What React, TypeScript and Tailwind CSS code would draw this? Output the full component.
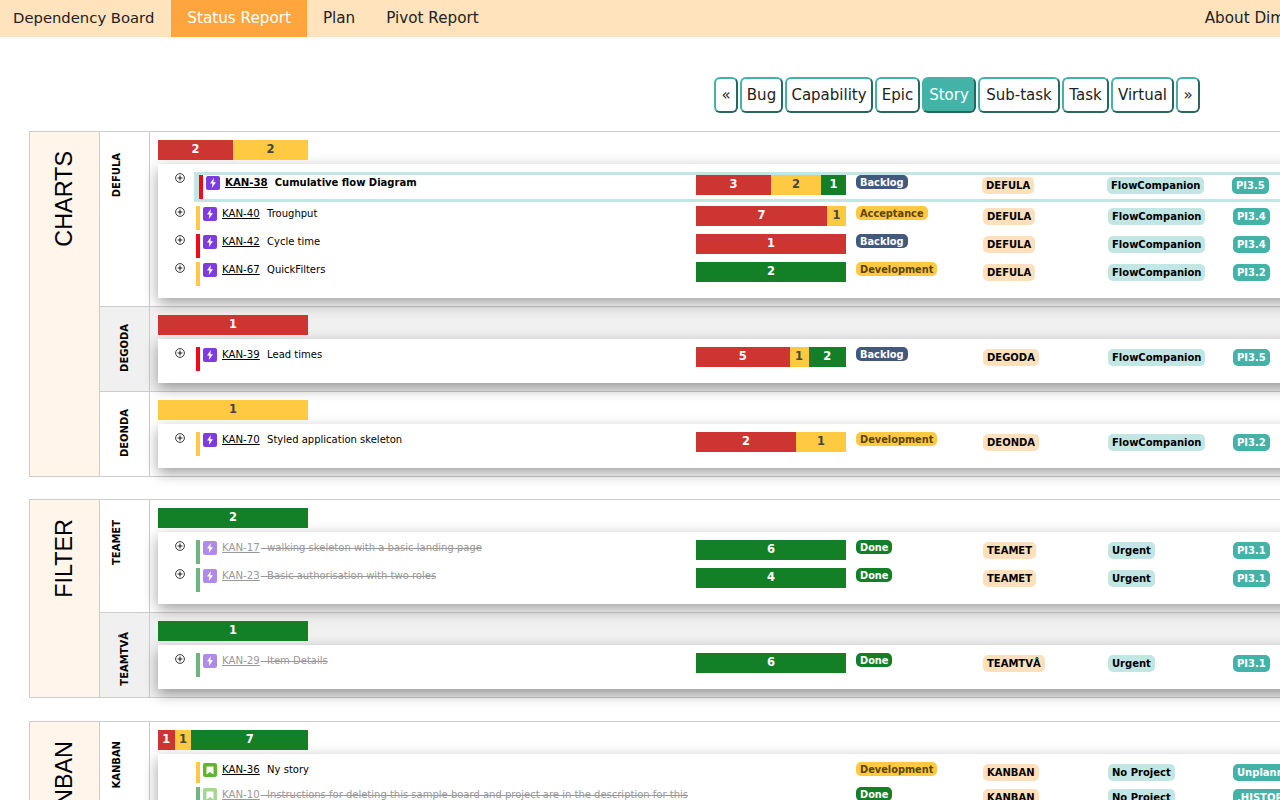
const FONT = "font-['DejaVu_Sans',Verdana,sans-serif]";

const FILTER_BUTTONS = [
    { label: "«", width: "w-[24px]" },
    { label: "Bug", width: "w-[43px]" },
    { label: "Capability", width: "w-[88px]" },
    { label: "Epic", width: "w-[45px]" },
    { label: "Story", width: "w-[54px]" },
    { label: "Sub-task", width: "w-[82px]" },
    { label: "Task", width: "w-[47px]" },
    { label: "Virtual", width: "w-[63px]" },
    { label: "»", width: "w-[24px]" },
];

type Segment = { n: number; color: "red" | "yellow" | "green" };
type Issue = {
    id: string;
    title: string;
    flag: string;
    type?: "story";
    bar?: Segment[];
    status: string;
    team: string;
    project: string;
    pi: string;
    selected?: boolean;
    done?: boolean;
    noExpand?: boolean;
};
type Team = { name: string; top: string; bar: Segment[]; issues: Issue[] };
type Group = { name: string; teams: Team[] };

const FLAG_RED = "bg-[#f5061d]";
const FLAG_YELLOW = "bg-[#ffc942]";
const FLAG_GREEN = "bg-[#70b47e]";

const r = (n: number): Segment => ({ n, color: "red" });
const y = (n: number): Segment => ({ n, color: "yellow" });
const g = (n: number): Segment => ({ n, color: "green" });

const groups: Group[] = [
    {
        name: "CHARTS",
        teams: [
            {
                name: "DEFULA",
                top: "pt-[21px] pl-[11px]",
                bar: [r(2), y(2)],
                issues: [
                    { id: "KAN-38", title: "Cumulative flow Diagram", flag: FLAG_RED, bar: [r(3), y(2), g(1)], status: "Backlog", team: "DEFULA", project: "FlowCompanion", pi: "PI3.5", selected: true },
                    { id: "KAN-40", title: "Troughput", flag: FLAG_YELLOW, bar: [r(7), y(1)], status: "Acceptance", team: "DEFULA", project: "FlowCompanion", pi: "PI3.4" },
                    { id: "KAN-42", title: "Cycle time", flag: FLAG_RED, bar: [r(1)], status: "Backlog", team: "DEFULA", project: "FlowCompanion", pi: "PI3.4" },
                    { id: "KAN-67", title: "QuickFilters", flag: FLAG_YELLOW, bar: [g(2)], status: "Development", team: "DEFULA", project: "FlowCompanion", pi: "PI3.2" },
                ],
            },
            {
                name: "DEGODA",
                top: "pt-[17px] pl-[19px]",
                bar: [r(1)],
                issues: [
                    { id: "KAN-39", title: "Lead times", flag: FLAG_RED, bar: [r(5), y(1), g(2)], status: "Backlog", team: "DEGODA", project: "FlowCompanion", pi: "PI3.5" },
                ],
            },
            {
                name: "DEONDA",
                top: "pt-[17px] pl-[19px]",
                bar: [y(1)],
                issues: [
                    { id: "KAN-70", title: "Styled application skeleton", flag: FLAG_YELLOW, bar: [r(2), y(1)], status: "Development", team: "DEONDA", project: "FlowCompanion", pi: "PI3.2" },
                ],
            },
        ],
    },
    {
        name: "FILTER",
        teams: [
            {
                name: "TEAMET",
                top: "pt-[20px] pl-[11px]",
                bar: [g(2)],
                issues: [
                    { id: "KAN-17", title: "walking skeleton with a basic landing page", flag: FLAG_GREEN, bar: [g(6)], status: "Done", team: "TEAMET", project: "Urgent", pi: "PI3.1", done: true },
                    { id: "KAN-23", title: "Basic authorisation with two roles", flag: FLAG_GREEN, bar: [g(4)], status: "Done", team: "TEAMET", project: "Urgent", pi: "PI3.1", done: true },
                ],
            },
            {
                name: "TEAMTVÅ",
                top: "pt-[19px] pl-[19px]",
                bar: [g(1)],
                issues: [
                    { id: "KAN-29", title: "Item Details", flag: FLAG_GREEN, bar: [g(6)], status: "Done", team: "TEAMTVÅ", project: "Urgent", pi: "PI3.1", done: true },
                ],
            },
        ],
    },
    {
        name: "KANBAN",
        teams: [
            {
                name: "KANBAN",
                top: "pt-[19px] pl-[11px]",
                bar: [r(1), y(1), g(7)],
                issues: [
                    { id: "KAN-36", title: "Ny story", flag: FLAG_YELLOW, type: "story", status: "Development", team: "KANBAN", project: "No Project", pi: "Unplanned", noExpand: true },
                    { id: "KAN-10", title: "Instructions for deleting this sample board and project are in the description for this", flag: FLAG_GREEN, type: "story", status: "Done", team: "KANBAN", project: "No Project", pi: ".HISTORY", noExpand: true, done: true },
                ],
            },
        ],
    },
];

function ExpandIcon() {
    return (
        <svg width="10" height="10" viewBox="0 0 10 10" fill="none" stroke="#222" className="block">
            <circle cx="5" cy="5" r="4.4" strokeWidth="0.9" />
            <path d="M5 2.6v4.8M2.6 5h4.8" strokeWidth="1.1" />
        </svg>
    );
}

function TypeIcon({ story, done }: { story: boolean; done: boolean }) {
    const bg = story ? (done ? "bg-[#a6d78f]" : "bg-[#5cb82f]") : done ? "bg-[#b08ae8]" : "bg-[#7d3ce0]";
    return (
        <span className={`${bg} flex h-[14px] w-[14px] shrink-0 items-center justify-center rounded-[2px]`}>
            {story ? (
                <svg width="8" height="9" viewBox="0 0 8 9" fill="white">
                    <path d="M0.5 0.5h7v8L4 6 0.5 8.5z" />
                </svg>
            ) : (
                <svg width="8" height="10" viewBox="0 0 8 10" fill="white">
                    <path d="M4.8 0 1 5.6h2.4L2.8 10 7 4.2H4.4z" />
                </svg>
            )}
        </span>
    );
}

function ProgressBar({ segments }: { segments: Segment[] }) {
    const total = segments.reduce((sum, s) => sum + s.n, 0);
    return (
        <div className="flex h-5 w-[150px] shrink-0 text-[11.5px] font-bold leading-[18px]">
            {segments.map((s, i) => (
                <div
                    key={i}
                    style={{ width: `${(s.n / total) * 100}%` }}
                    className={
                        s.color === "red"
                            ? "bg-[#cd3532] text-center text-white"
                            : s.color === "yellow"
                              ? "bg-[#ffc942] text-center text-[#444]"
                              : "bg-[#137f26] text-center text-white"
                    }
                >
                    {s.n}
                </div>
            ))}
        </div>
    );
}

function StatusBadge({ status }: { status: string }) {
    const colors =
        status === "Backlog"
            ? "bg-[#42597e] text-white"
            : status === "Done"
              ? "bg-[#137f26] text-white"
              : "bg-[#ffc942] text-[#5a4300]";
    return (
        <span className={`${colors} block h-[14px] rounded-[5px] px-1 text-[9.8px] font-bold leading-[15px]`}>
            {status}
        </span>
    );
}

function Pill({ text, colors }: { text: string; colors: string }) {
    return (
        <span className={`${colors} mt-[2px] block h-[17px] whitespace-nowrap rounded-[5px] px-1 text-[10px] font-bold leading-[17px]`}>
            {text}
        </span>
    );
}

function IssueRow({ issue }: { issue: Issue }) {
    const done = !!issue.done;
    const height = issue.noExpand ? "h-[21px]" : "h-6";
    return (
        <div className="mb-1 flex items-start">
            <div className="ml-[17px] mt-[1px] w-[10px] shrink-0">{!issue.noExpand && <ExpandIcon />}</div>
            <div
                className={
                    issue.selected
                        ? "ml-[9px] flex flex-1 border-y-[3px] border-l-[5px] border-[#c1e6e3]"
                        : "ml-[11px] flex flex-1"
                }
            >
                <div className={`flex shrink-0 ${issue.selected ? "w-[497px]" : "w-[500px]"}`}>
                    <div className={`${issue.flag} ${height} w-1 shrink-0`} />
                    <div className="ml-[3px] mt-[1px] flex min-w-0">
                        <TypeIcon story={issue.type === "story"} done={done} />
                        <span className={`ml-[5px] h-[14px] text-[10.2px] leading-[14px] underline ${done ? "text-[#999]" : "text-black"} ${issue.selected ? "font-bold" : ""}`}>
                            {issue.id}
                        </span>
                        <span className={`h-[14px] whitespace-nowrap text-[10px] leading-[14px] ${done ? "text-[#999] line-through" : "text-black"} ${issue.selected ? "font-bold" : "ml-[1px]"}`}>
                            {"\u00a0\u00a0" + issue.title}
                        </span>
                    </div>
                </div>
                <div className="w-[150px] shrink-0">{issue.bar && <ProgressBar segments={issue.bar} />}</div>
                <div className={`ml-[10px] flex shrink-0 items-start ${issue.selected ? "w-[126px]" : "w-[127px]"}`}>
                    <StatusBadge status={issue.status} />
                </div>
                <div className="flex w-[125px] shrink-0 items-start">
                    <Pill text={issue.team} colors="bg-[#ffe0bc] text-black" />
                </div>
                <div className="flex w-[125px] shrink-0 items-start">
                    <Pill text={issue.project} colors="bg-[#c1e6e3] text-black" />
                </div>
                <div className="flex shrink-0 items-start">
                    <Pill text={issue.pi} colors="bg-[#43b3a8] text-white" />
                </div>
            </div>
        </div>
    );
}

function TeamRow({ team, index }: { team: Team; index: number }) {
    return (
        <div className={`flex ${index > 0 ? "border-t border-[#ccc]" : ""} ${index === 1 ? "bg-[#f0f0f0]" : "bg-white"}`}>
            <div className={`w-[50px] shrink-0 border-r border-[#ccc] ${team.top}`}>
                <div className="rotate-180 text-[10px] font-bold leading-[12px] text-black [writing-mode:vertical-rl]">
                    {team.name}
                </div>
            </div>
            <div className="flex-1 px-2 py-2">
                <ProgressBar segments={team.bar} />
                <div className="mt-1 bg-white pb-2 pt-2 shadow-[0_5px_14px_rgba(0,0,0,0.38)]">
                    {team.issues.map((issue) => (
                        <IssueRow key={issue.id} issue={issue} />
                    ))}
                </div>
            </div>
        </div>
    );
}

export default function App() {
    return (
        <div className={`${FONT} h-[800px] w-full overflow-hidden bg-white`}>
            <nav className="flex h-[37px] bg-[#ffe3bd] text-[15.2px] leading-[36px] text-[#222]">
                <a className="shrink-0 whitespace-nowrap pl-[13px] pr-[17px] text-[14.8px] leading-[35px]">Dependency Board</a>
                <a className="shrink-0 whitespace-nowrap bg-[#ffa53e] px-4 text-white">Status Report</a>
                <a className="shrink-0 whitespace-nowrap px-4">Plan</a>
                <a className="-ml-px shrink-0 whitespace-nowrap px-4">Pivot Report</a>
                <a className="ml-[694px] shrink-0 whitespace-nowrap px-4">About Dimensions</a>
            </nav>

            <div className="flex justify-end gap-[2px] pr-[80px] pt-10 text-[15px] text-[#222]">
                {FILTER_BUTTONS.map((button) => (
                    <button
                        key={button.label}
                        className={`${button.width} h-9 rounded-[6px] border-2 border-[#43b3a8] border-b-[#2a6660] border-r-[#2a6660] text-center ${button.label === "Story" ? "bg-[#43b3a8] text-white" : ""}`}
                    >
                        {button.label}
                    </button>
                ))}
            </div>

            <div className="ml-[29px] mt-[18px] flex w-[1500px] flex-col gap-[22px]">
                {groups.map((group) => (
                    <section key={group.name} className={`flex border border-[#ccc] ${group.name === "KANBAN" ? "mt-[1px]" : ""}`}>
                        <div className="flex w-[70px] shrink-0 justify-center border-r border-[#ccc] bg-[#fff5ea] pr-[2px] pt-[19px]">
                            <div className="h-fit rotate-180 font-['Liberation_Sans',Arial,sans-serif] text-[23.4px] leading-[28px] text-black [writing-mode:vertical-rl]">
                                {group.name}
                            </div>
                        </div>
                        <div className="flex-1">
                            {group.teams.map((team, i) => (
                                <TeamRow key={team.name} team={team} index={i} />
                            ))}
                        </div>
                    </section>
                ))}
            </div>
        </div>
    );
}
